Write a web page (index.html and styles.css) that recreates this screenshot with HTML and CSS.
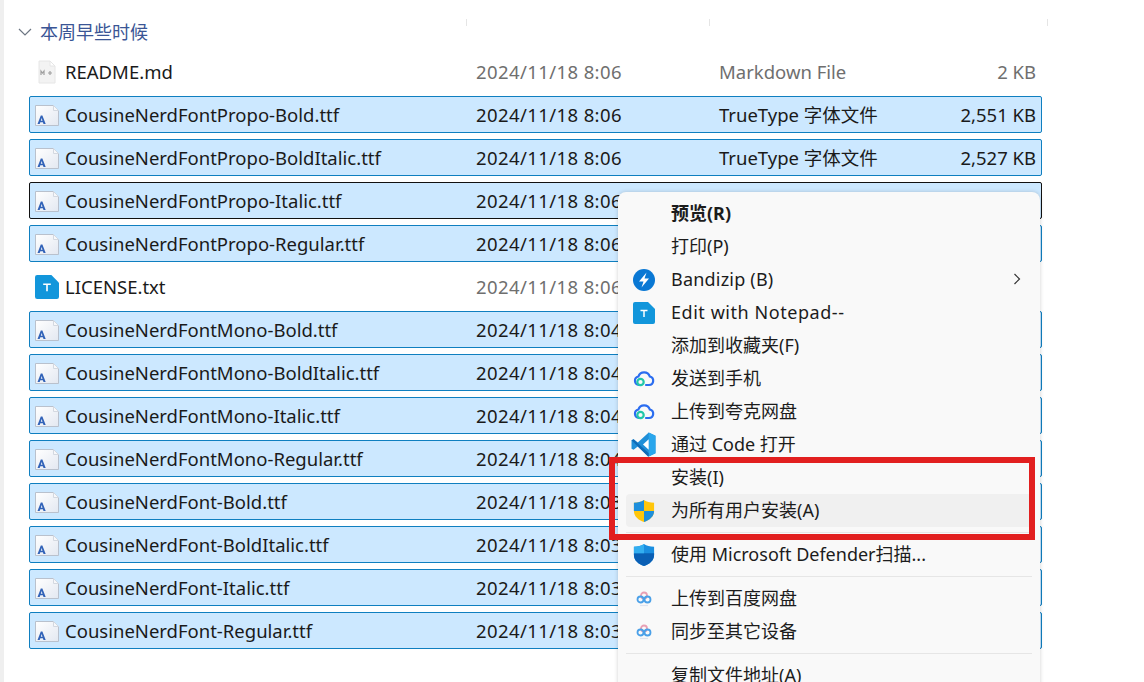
FILE: index.html
```html
<!DOCTYPE html>
<html lang="zh">
<head>
<meta charset="utf-8">
<title>本周早些时候</title>
<link rel="stylesheet" href="styles.css">
</head>
<body>
<svg class="defs" width="0" height="0">
  <defs>
    <linearGradient id="fp" x1="0" y1="0" x2="1" y2="1"><stop offset="0" stop-color="#ffffff"/><stop offset="1" stop-color="#e3e8f1"/></linearGradient>
    <symbol id="font" viewBox="0 0 24 22">
      <path d="M.5 1.500h18l5 5v15H.5z" fill="url(#fp)" stroke="#b9c1cd"/>
      <path d="M18.500 1.500v5h5z" fill="#f7f8fa" stroke="#d3d8e0"/>
      <path d="M2.500 20l3.300-8.500h1.600L10.700 20H8.500l-.6-1.800H5.300L4.700 20zM5.800 16.700h1.700l-.8-2.700z" fill="#3263b8"/>
    </symbol>
    <symbol id="notepad" viewBox="0 0 22 22">
      <path d="M2 0h13l7 7v13a2 2 0 0 1-2 2H2a2 2 0 0 1-2-2V2a2 2 0 0 1 2-2z" fill="#1296db"/>
      <path d="M7.500 8.500h7M11 8.500v6.500" stroke="#fff" stroke-width="1.500" fill="none"/>
    </symbol>
    <symbol id="cloud" viewBox="0 0 22 22">
      <path d="M8 17H6a4.300 4.300 0 0 1-.6-8.500 6 6 0 0 1 11.400 0A4.300 4.300 0 0 1 16 17h-3" fill="none" stroke="#2b6df0" stroke-width="2.200" stroke-linecap="round"/>
      <circle cx="7.500" cy="14" r="3.200" fill="none" stroke="#22c7a9" stroke-width="2.200"/>
    </symbol>
    <symbol id="baidu" viewBox="0 0 16 18">
      <circle cx="8" cy="5.500" r="3" fill="none" stroke="#e8a0b4" stroke-width="1.800"/>
      <circle cx="4.500" cy="9.500" r="3" fill="none" stroke="#4aa0e8" stroke-width="1.800"/>
      <circle cx="11.500" cy="9.500" r="3" fill="none" stroke="#4aa0e8" stroke-width="1.800"/>
      <path d="M4 15.500h8" stroke="#dfe3ef" stroke-width="1.200"/>
    </symbol>
  </defs>
</svg>
<div class="sidebar-edge"></div>
<main class="explorer">
  <div class="col-rules"><span class="rule r1"></span><span class="rule r2"></span><span class="rule r3"></span></div>
  <div class="group-head">
    <svg class="chev" viewBox="0 0 14 8"><path d="M1 1l6 6 6-6" fill="none" stroke="#6d7683" stroke-width="1.200"/></svg>
    <span>本周早些时候</span>
  </div>
  <div class="list">
    <div class="row">
      <svg class="ficon" viewBox="0 0 24 24"><path d="M4 1h11l5 5v17H4z" fill="#f3f3f3" stroke="#e6e6e6"/><path d="M15 1v5h5z" fill="#fff" stroke="#e6e6e6"/><path d="M6 15v-4l1.500 2 1.500-2v4M13 13h4M15 11v4" fill="none" stroke="#a0a0a0" stroke-width="1.200"/></svg>
      <span class="name">README.md</span><span class="date muted">2024/11/18 8:06</span><span class="type muted">Markdown File</span><span class="size muted">2 KB</span>
    </div>
    <div class="row sel"><svg class="ficon"><use href="#font"/></svg><span class="name">CousineNerdFontPropo-Bold.ttf</span><span class="date">2024/11/18 8:06</span><span class="type">TrueType 字体文件</span><span class="size">2,551 KB</span></div>
    <div class="row sel"><svg class="ficon"><use href="#font"/></svg><span class="name">CousineNerdFontPropo-BoldItalic.ttf</span><span class="date">2024/11/18 8:06</span><span class="type">TrueType 字体文件</span><span class="size">2,527 KB</span></div>
    <div class="row sel focus"><svg class="ficon"><use href="#font"/></svg><span class="name">CousineNerdFontPropo-Italic.ttf</span><span class="date">2024/11/18 8:06</span></div>
    <div class="row sel"><svg class="ficon"><use href="#font"/></svg><span class="name">CousineNerdFontPropo-Regular.ttf</span><span class="date">2024/11/18 8:06</span></div>
    <div class="row">
      <svg class="ficon"><use href="#notepad"/></svg><span class="name">LICENSE.txt</span><span class="date muted">2024/11/18 8:06</span>
    </div>
    <div class="row sel"><svg class="ficon"><use href="#font"/></svg><span class="name">CousineNerdFontMono-Bold.ttf</span><span class="date">2024/11/18 8:04</span></div>
    <div class="row sel"><svg class="ficon"><use href="#font"/></svg><span class="name">CousineNerdFontMono-BoldItalic.ttf</span><span class="date">2024/11/18 8:04</span></div>
    <div class="row sel"><svg class="ficon"><use href="#font"/></svg><span class="name">CousineNerdFontMono-Italic.ttf</span><span class="date">2024/11/18 8:04</span></div>
    <div class="row sel"><svg class="ficon"><use href="#font"/></svg><span class="name">CousineNerdFontMono-Regular.ttf</span><span class="date">2024/11/18 8:04</span></div>
    <div class="row sel"><svg class="ficon"><use href="#font"/></svg><span class="name">CousineNerdFont-Bold.ttf</span><span class="date">2024/11/18 8:03</span></div>
    <div class="row sel"><svg class="ficon"><use href="#font"/></svg><span class="name">CousineNerdFont-BoldItalic.ttf</span><span class="date">2024/11/18 8:03</span></div>
    <div class="row sel"><svg class="ficon"><use href="#font"/></svg><span class="name">CousineNerdFont-Italic.ttf</span><span class="date">2024/11/18 8:03</span></div>
    <div class="row sel"><svg class="ficon"><use href="#font"/></svg><span class="name">CousineNerdFont-Regular.ttf</span><span class="date">2024/11/18 8:03</span></div>
  </div>
</main>

<nav class="menu">
  <div class="item strong"><span class="mi"></span><span>预览(R)</span></div>
  <div class="item"><span class="mi"></span><span>打印(P)</span></div>
  <div class="item"><span class="mi"><svg class="micon" viewBox="0 0 22 22"><circle cx="11" cy="11" r="11" fill="#0a78d4"/><path d="M13.500 3.500L6 12.500h4.500L8.500 18.500l7.500-9h-4.500z" fill="#fff"/></svg></span><span class="wide">Bandizip (B)</span><svg class="sub" viewBox="0 0 8 12"><path d="M1.500 1l5 5-5 5" fill="none" stroke="#333" stroke-width="1.200"/></svg></div>
  <div class="item"><span class="mi"><svg class="micon"><use href="#notepad"/></svg></span><span class="wider">Edit with Notepad--</span></div>
  <div class="item"><span class="mi"></span><span>添加到收藏夹(F)</span></div>
  <div class="item"><span class="mi"><svg class="micon"><use href="#cloud"/></svg></span><span>发送到手机</span></div>
  <div class="item"><span class="mi"><svg class="micon"><use href="#cloud"/></svg></span><span>上传到夸克网盘</span></div>
  <div class="item"><span class="mi"><svg class="micon big" viewBox="0 0 24 24"><path d="M17 .5L23.500 3.500v17L17 23.500 6.500 14 2.500 17 .5 16V8l2-1 4 3z" fill="#1f8fd8"/><path d="M17 .5L23.500 3.500v17L17 23.500z" fill="#2aa6ec"/><path d="M17 7l-5.500 5 5.500 5z" fill="#fff"/><path d="M.5 8l2-1 14.500 13.500v3l-.5.200z" fill="#0f6cb8"/></svg></span><span>通过 Code 打开</span></div>
  <div class="item"><span class="mi"></span><span>安装(I)</span></div>
  <div class="item hover"><span class="mi"><svg class="micon" viewBox="0 0 22 24"><path d="M11 0c3 2 6.500 3 11 3v9c0 6-5 10-11 12C5 22 0 18 0 12V3c4.500 0 8-1 11-3z" fill="#ffc60b"/><path d="M11 0c-3 2-6.500 3-11 3v9h11z" fill="#1e8fdc"/><path d="M11 12h11c0 6-5 10-11 12z" fill="#1e8fdc"/></svg></span><span>为所有用户安装(A)</span></div>
  <div class="sep"></div>
  <div class="item"><span class="mi"><svg class="micon" viewBox="0 0 22 24"><path d="M11 0c3 2 6.500 3 11 3v9c0 6-5 10-11 12C5 22 0 18 0 12V3c4.500 0 8-1 11-3z" fill="#1a8ee0"/><path d="M0 10h22v2c0 6-5 10-11 12C5 22 0 18 0 12z" fill="#0a5fb4"/><path d="M11 0v10H0V3c4.500 0 8-1 11-3z" fill="#33aef0"/></svg></span><span>使用 Microsoft Defender扫描...</span></div>
  <div class="sep"></div>
  <div class="item"><span class="mi"><svg class="micon small"><use href="#baidu"/></svg></span><span>上传到百度网盘</span></div>
  <div class="item"><span class="mi"><svg class="micon small"><use href="#baidu"/></svg></span><span>同步至其它设备</span></div>
  <div class="sep"></div>
  <div class="item"><span class="mi"></span><span>复制文件地址(A)</span></div>
</nav>
<div class="callout"></div>
</body>
</html>
```
FILE: styles.css
```css
* { box-sizing: border-box; }
html, body { margin: 0; padding: 0; height: 682px; overflow: hidden; background: #fff; }
body {
  font-family: "Noto Sans", "Noto Sans CJK SC", sans-serif;
  font-size: 18.500px;
  line-height: 24px;
  color: #1a1a1a;
  position: relative;
}
.defs { position: absolute; }
.sidebar-edge { position: absolute; left: 0; top: 0; bottom: 0; width: 4px; background: #efefef; }
.explorer { padding: 0 0 0 18px; position: relative; }
.col-rules { position: absolute; inset: 0 0 auto 0; height: 7px; }
.rule { position: absolute; top: 0; width: 1px; height: 7px; background: #e5e5e5; }
.r1 { left: 466px; } .r2 { left: 709px; } .r3 { left: 1047px; }
.group-head {
  display: flex; align-items: center; gap: 8px;
  height: 26px; margin-top: 19px;
  color: #3a5595; font-size: 18px;
}
.chev { width: 14px; height: 8px; }
.list { display: flex; flex-direction: column; gap: 6px; margin: 8px 0 0 11px; width: 1013px; }
.row {
  display: flex; align-items: center; height: 37px;
  border: 1px solid transparent; border-radius: 2px;
  padding: 0 5px;
  white-space: nowrap;
}
.row.sel { background: #cce8ff; border-color: #0f7fc0; }
.row.focus { border-color: #111; }
.ficon { width: 24px; height: 24px; flex: none; margin-right: 6px; }
.name { width: 411px; flex: none; }
.date { width: 243px; flex: none; letter-spacing: .4px; }
.type { width: 200px; flex: none; }
.size { flex: 1; text-align: right; }
.muted { color: #6f6f6f; }
.menu {
  position: absolute; left: 618px; top: 192px; width: 422px; height: 520px;
  background: #f9f9f9; border-radius: 8px;
  box-shadow: 0 0 4px rgba(0,0,0,.18);
  padding: 5px 8px;
  font-size: 18px;
  color: #1c1c1c;
  line-height: 22px;
}
.item {
  display: flex; align-items: center; height: 33px;
  border-radius: 4px; white-space: nowrap;
  padding-bottom: 2px;
}
.item.strong { font-weight: 700; }
.item.hover { background: #f0f0f0; }
.wide { letter-spacing: .2px; }
.wider { letter-spacing: .55px; }
.mi { width: 45px; flex: none; display: flex; align-items: center; justify-content: center; padding-right: 10px; margin-top: 2px; }
.micon { width: 22px; height: 22px; display: block; }
.micon.big { width: 25px; height: 25px; }
.micon.small { width: 16px; height: 18px; }
.sub { width: 8px; height: 12px; margin-left: auto; margin-right: 11px; }
.sep { height: 1px; background: #e6e6e6; margin: 5px 0 5px; }
.callout {
  position: absolute; left: 609px; top: 457px; width: 426px; height: 83px;
  border: 6px solid #e21f1f;
}
```
